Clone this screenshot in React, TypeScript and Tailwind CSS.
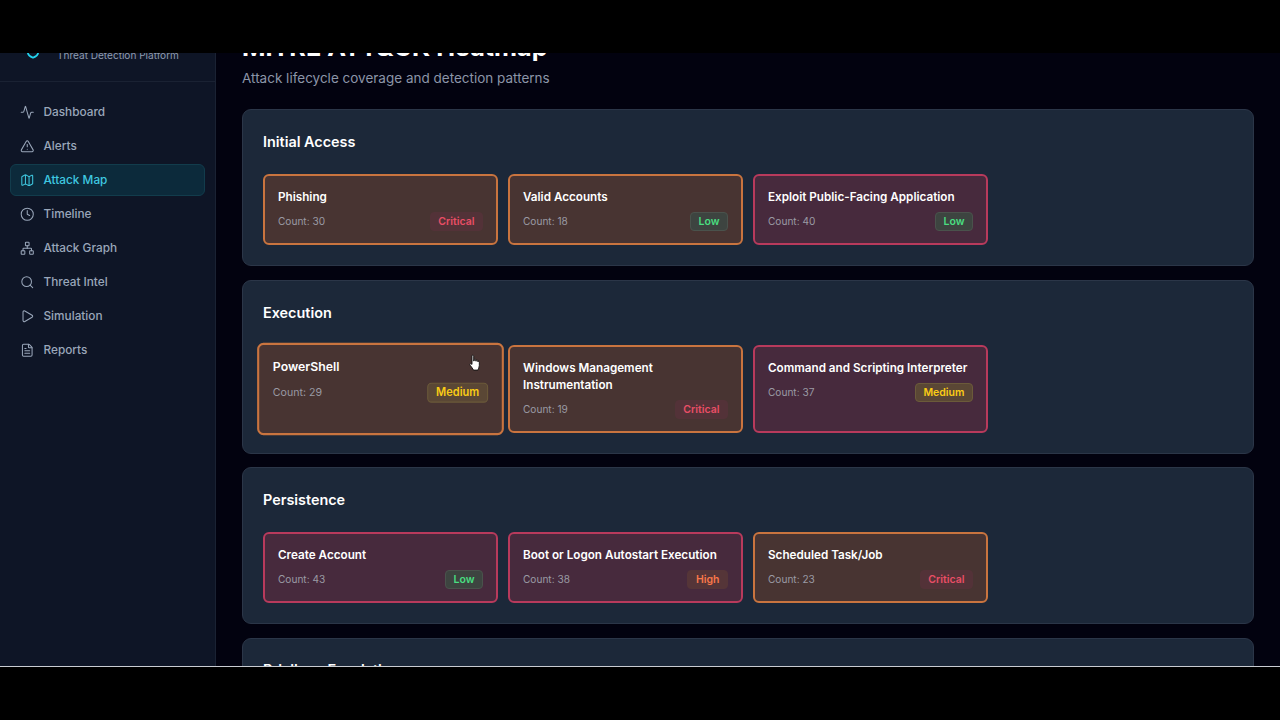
import { Activity, TriangleAlert, Map, Clock, Network, Search, Play, FileText, Shield } from "lucide-react";

const nav = [
  { label: "Dashboard", Icon: Activity },
  { label: "Alerts", Icon: TriangleAlert },
  { label: "Attack Map", Icon: Map, active: true },
  { label: "Timeline", Icon: Clock },
  { label: "Attack Graph", Icon: Network },
  { label: "Threat Intel", Icon: Search },
  { label: "Simulation", Icon: Play },
  { label: "Reports", Icon: FileText },
];

type Tech = { name: string; count: number; sev: "Low" | "Medium" | "High" | "Critical"; tone: "o" | "r"; hover?: boolean };

const sections: { title: string; items: Tech[] }[] = [
  {
    title: "Initial Access",
    items: [
      { name: "Phishing", count: 30, sev: "Critical", tone: "o" },
      { name: "Valid Accounts", count: 18, sev: "Low", tone: "o" },
      { name: "Exploit Public-Facing Application", count: 40, sev: "Low", tone: "r" },
    ],
  },
  {
    title: "Execution",
    items: [
      { name: "PowerShell", count: 29, sev: "Medium", tone: "o", hover: true },
      { name: "Windows Management Instrumentation", count: 19, sev: "Critical", tone: "o" },
      { name: "Command and Scripting Interpreter", count: 37, sev: "Medium", tone: "r" },
    ],
  },
  {
    title: "Persistence",
    items: [
      { name: "Create Account", count: 43, sev: "Low", tone: "r" },
      { name: "Boot or Logon Autostart Execution", count: 38, sev: "High", tone: "r" },
      { name: "Scheduled Task/Job", count: 23, sev: "Critical", tone: "o" },
    ],
  },
];

const badge: Record<Tech["sev"], string> = {
  Low: "text-[#4ade80] bg-[#3d4440] border-[#4a524c]",
  Medium: "text-[#facc15] bg-[#5a4735] border-[#6b5a3a]",
  High: "text-[#f9784a] bg-[#553538] border-[#553538]",
  Critical: "text-[#e94e66] bg-[#533238] border-[#533238]",
};

function Card({ t }: { t: Tech }) {
  const tone = t.tone === "o" ? "bg-[#483432] border-[#c9743f]" : "bg-[#472a3d] border-[#b83a5c]";
  return (
    <div className={`rounded-[6px] border-2 px-[13px] pt-[13px] pb-[12px] ${tone} ${t.hover ? "scale-105" : ""}`}>
      <div className="text-[11.7px] leading-[17px] font-semibold text-white">{t.name}</div>
      <div className="mt-[6px] flex items-center justify-between">
        <span className="text-[10.1px] text-[#9a9aa4]">Count: {t.count}</span>
        <span className={`rounded-[4px] border px-[7.5px] text-[10.5px] leading-[17px] font-semibold ${badge[t.sev]}`}>{t.sev}</span>
      </div>
    </div>
  );
}

export default function App() {
  return (
    <div className="relative flex h-screen w-full flex-col overflow-hidden bg-black font-['Inter',sans-serif]">
      <div className="h-[53px] shrink-0 bg-black" />
      <div className="flex h-[613px] shrink-0 overflow-hidden">
        <aside className="w-[216px] shrink-0 border-r border-[#1a2233] bg-[#0e1526]">
          <div className="flex h-[29px] gap-[16px] border-b border-[#1a2233] pl-[25px]">
            <Shield className="-mt-[10px] h-[16px] w-[16px] shrink-0 text-[#22d3ee]" strokeWidth={2.5} />
            <div className="-mt-[5px] text-[10.05px] leading-[14px] text-[#8f9bb0]">Threat Detection Platform</div>
          </div>
          <nav className="flex flex-col gap-[2px] px-[10px] pt-[14px]">
            {nav.map(({ label, Icon, active }) => (
              <div
                key={label}
                className={`flex h-[32px] items-center gap-[9px] rounded-[6px] border pt-[1px] pl-[9px] text-[11.8px] font-medium ${
                  active ? "border-[#123c4c] bg-[#0c2a3b] text-[#3fc8e0]" : "border-transparent text-[#9aa7ba]"
                }`}
              >
                <Icon className="h-[14.5px] w-[14.5px] shrink-0" strokeWidth={1.7} />
                {label}
              </div>
            ))}
          </nav>
        </aside>
        <main className="min-w-0 flex-1 bg-[#02020f] pr-[26px] pl-[26px]">
          <h1 className="-mt-[23px] text-[25.2px] leading-[34px] font-bold text-white">MITRE ATT&amp;CK Heatmap</h1>
          <p className="mt-[4px] text-[13.5px] leading-[20px] text-[#8c95a8]">Attack lifecycle coverage and detection patterns</p>
          <div className="mt-[21px] flex flex-col gap-[13.7px]">
            {sections.map((s) => (
              <section key={s.title} className="rounded-[9px] border border-[#2b3648] bg-[#1c2839] p-[20px]">
                <h2 className="mb-[20px] text-[14.4px] leading-[24px] font-semibold text-white">{s.title}</h2>
                <div className="grid grid-cols-4 gap-[10px]">
                  {s.items.map((t) => (
                    <Card key={t.name} t={t} />
                  ))}
                </div>
              </section>
            ))}
            <section className="rounded-[9px] border border-[#2b3648] bg-[#1c2839] px-[20px] pt-[19px] pb-[20px]">
              <h2 className="text-[14.4px] leading-[24px] font-semibold text-white">Privilege Escalation</h2>
            </section>
          </div>
        </main>
      </div>
      <div className="h-[1px] bg-[#c9ccd2]" />
      <div className="flex-1 bg-black" />
      <svg className="absolute top-[354px] left-[468px] h-[17px] w-[13px]" viewBox="0 0 13 17">
        <path
          d="M4 1.5c.7-.6 1.6-.2 1.7.7V7l.5-.1V5.8c.3-.7 1.3-.7 1.6 0v1.3l.4.1V6.5c.3-.7 1.3-.6 1.5.1v1l.3.1c.4-.6 1.2-.3 1.3.4v3.4c0 2-1 3.4-1.4 4.6H5.5c-.6-1.4-2-3-3.3-4.8-.7-1-.2-1.9.7-1.7l1.1.8V2.2c0-.3 0-.5 0-.7z"
          fill="#fff"
          stroke="#111"
          strokeWidth="0.9"
        />
      </svg>
    </div>
  );
}
